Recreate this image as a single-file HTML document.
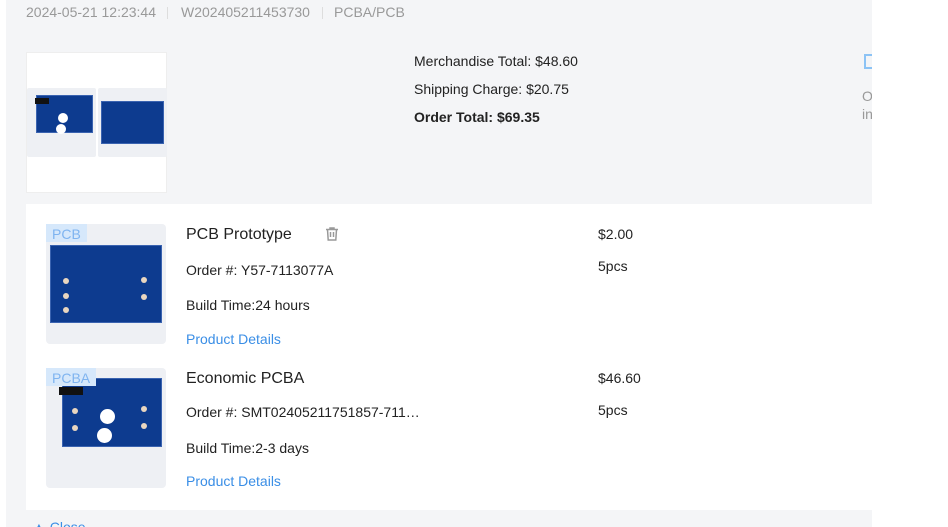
<!DOCTYPE html>
<html style="width:948px;height:527px;overflow:hidden"><head><style>
*{margin:0;padding:0;box-sizing:border-box}
body{width:948px;height:527px;background:#fff;font-family:"Liberation Sans",sans-serif;position:relative;overflow:hidden;color:#222}
.a{position:absolute}
.pcb{position:absolute;background:#0d3b8f;border:1px solid #3a63b0}
.pad{position:absolute;background:#c49a7a}
.hole{position:absolute;width:6px;height:6px;border-radius:50%;background:#e9d6c0}
.blue{color:#3a8ee6}
</style></head><body>
<div class="a" style="left:6px;top:0;width:866px;height:527px;background:#f4f5f7"></div>
<div class="a" style="left:26px;top:4px;font-size:14px;color:#999">2024-05-21 12:23:44</div>
<div class="a" style="left:167px;top:7px;width:1px;height:12px;background:#ddd"></div>
<div class="a" style="left:181px;top:4px;font-size:14px;color:#999">W202405211453730</div>
<div class="a" style="left:322px;top:7px;width:1px;height:12px;background:#ddd"></div>
<div class="a" style="left:334px;top:4px;font-size:14px;color:#999">PCBA/PCB</div>

<div class="a" style="left:26px;top:52px;width:141px;height:141px;background:#fff;border:1px solid #eee"></div>
<div class="a" style="left:27px;top:88px;width:69px;height:69px;background:#eef0f4;border-radius:2px"></div>
<div class="pcb" style="left:36px;top:95px;width:57px;height:38px"></div>
<div class="a" style="left:35px;top:98px;width:14px;height:6px;background:#111"></div>
<div class="a" style="left:58px;top:113px;width:10px;height:10px;border-radius:50%;background:#fff"></div>
<div class="a" style="left:56px;top:124px;width:10px;height:10px;border-radius:50%;background:#fff"></div>
<div class="a" style="left:98px;top:88px;width:69px;height:69px;background:#eef0f4;border-radius:2px"></div>
<div class="pcb" style="left:101px;top:101px;width:63px;height:43px"></div>

<div class="a" style="left:414px;top:53px;font-size:14px">Merchandise Total: $48.60</div>
<div class="a" style="left:414px;top:81px;font-size:14px">Shipping Charge: $20.75</div>
<div class="a" style="left:414px;top:109px;font-size:14px;font-weight:bold">Order Total: $69.35</div>
<div class="a" style="left:864px;top:54px;width:8px;height:15px;border:2px solid #8cc3f5;border-right:none"></div>
<div class="a" style="left:862px;top:87px;font-size:14px;color:#999;width:10px;overflow:hidden;line-height:18px">O<br>in</div>

<div class="a" style="left:26px;top:204px;width:846px;height:306px;background:#fff"></div>

<div class="a" style="left:46px;top:224px;width:120px;height:120px;background:#eef0f4;border-radius:4px"></div>
<div class="pcb" style="left:50px;top:245px;width:112px;height:78px"></div>
<div class="hole" style="left:63px;top:278px"></div><div class="hole" style="left:63px;top:293px"></div><div class="hole" style="left:63px;top:307px"></div>
<div class="hole" style="left:141px;top:277px"></div><div class="hole" style="left:141px;top:294px"></div>
<div class="a" style="left:46px;top:224px;width:41px;height:18px;background:#d6e8fb;color:#7fb4f0;font-size:14px;padding:2px 0 0 6px">PCB</div>
<div class="a" style="left:186px;top:226px;font-size:16px">PCB Prototype</div>
<svg class="a" style="left:324px;top:226px" width="16" height="16" viewBox="0 0 16 16" fill="none" stroke="#999" stroke-width="1.5"><path d="M2 3.5h12M6 3.5V2h4v1.5M3.5 3.5l.7 10.5h7.6l.7-10.5M6.5 6v5M9.5 6v5"/></svg>
<div class="a" style="left:186px;top:262px;font-size:14px">Order #: Y57-7113077A</div>
<div class="a" style="left:186px;top:297px;font-size:14px">Build Time:24 hours</div>
<div class="a blue" style="left:186px;top:331px;font-size:14px">Product Details</div>
<div class="a" style="left:598px;top:226px;font-size:14px">$2.00</div>
<div class="a" style="left:598px;top:258px;font-size:14px">5pcs</div>

<div class="a" style="left:46px;top:368px;width:120px;height:120px;background:#eef0f4;border-radius:4px"></div>
<div class="pcb" style="left:62px;top:378px;width:100px;height:69px"></div>
<div class="a" style="left:59px;top:387px;width:24px;height:8px;background:#111"></div>
<div class="a" style="left:100px;top:409px;width:15px;height:15px;border-radius:50%;background:#fff"></div>
<div class="a" style="left:97px;top:428px;width:15px;height:15px;border-radius:50%;background:#fff"></div>
<div class="hole" style="left:72px;top:408px"></div><div class="hole" style="left:72px;top:425px"></div>
<div class="hole" style="left:141px;top:406px"></div><div class="hole" style="left:141px;top:423px"></div>
<div class="a" style="left:46px;top:368px;width:50px;height:18px;background:#d6e8fb;color:#7fb4f0;font-size:14px;padding:2px 0 0 6px">PCBA</div>
<div class="a" style="left:186px;top:370px;font-size:16px">Economic PCBA</div>
<div class="a" style="left:186px;top:404px;font-size:14px">Order #: SMT02405211751857-711…</div>
<div class="a" style="left:186px;top:440px;font-size:14px">Build Time:2-3 days</div>
<div class="a blue" style="left:186px;top:473px;font-size:14px">Product Details</div>
<div class="a" style="left:598px;top:370px;font-size:14px">$46.60</div>
<div class="a" style="left:598px;top:402px;font-size:14px">5pcs</div>
<div class="a blue" style="left:32px;top:519px;font-size:14px">▲ Close</div>
</body></html>
